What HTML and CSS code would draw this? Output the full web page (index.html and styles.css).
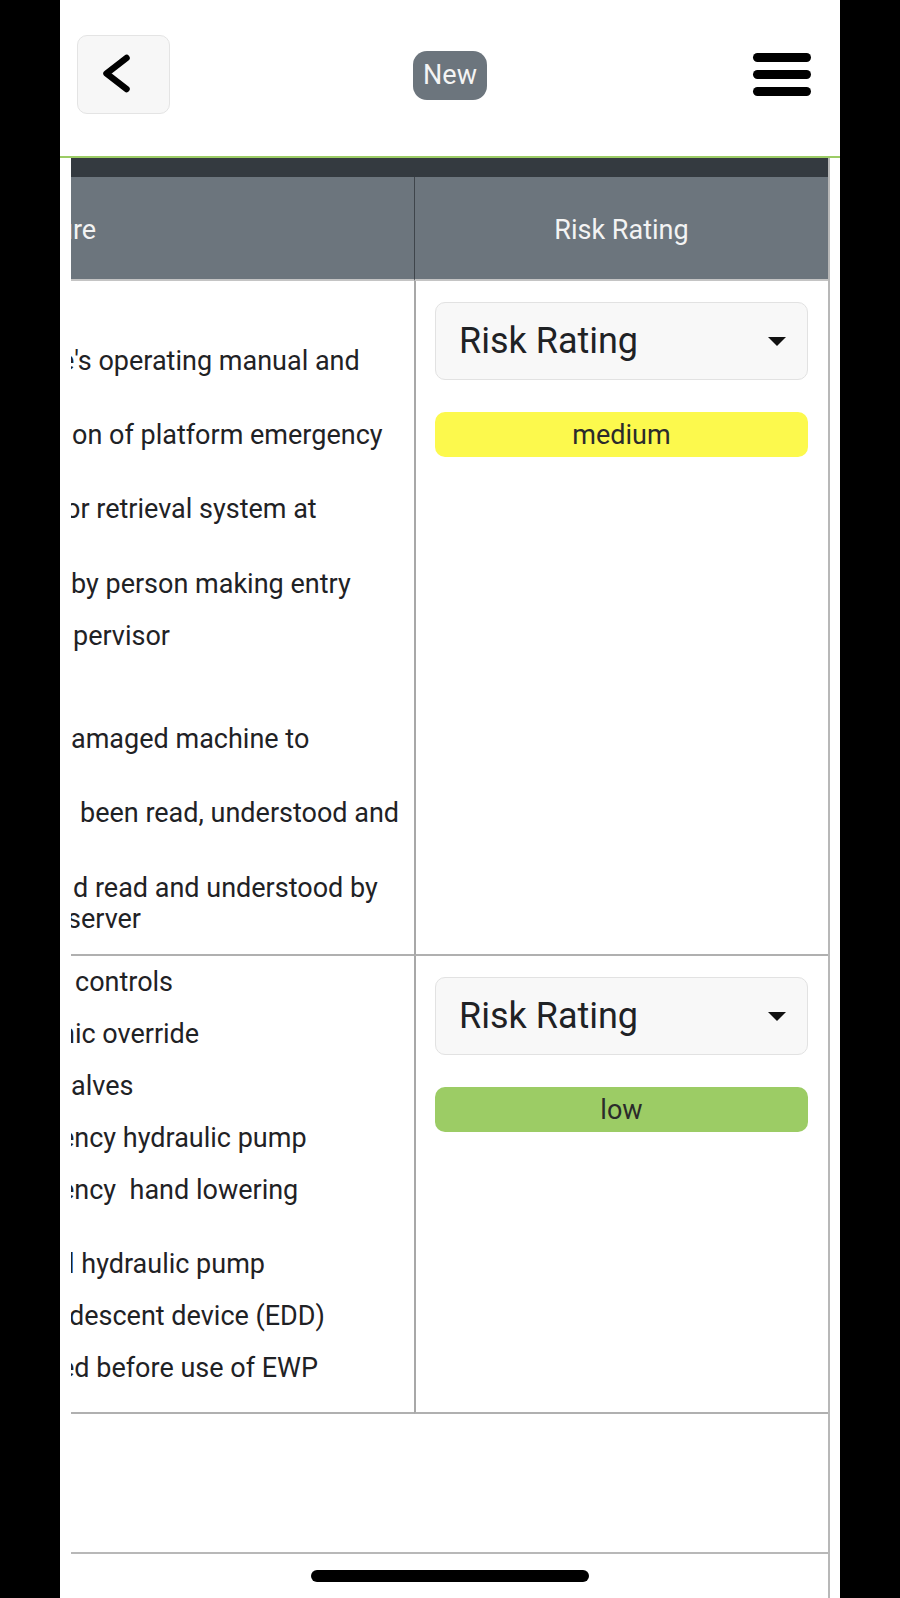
FILE: index.html
```html
<!DOCTYPE html>
<html lang="en">
<head>
<meta charset="utf-8">
<title>Risk Rating</title>
<link rel="stylesheet" href="styles.css">
</head>
<body>
<div class="screen">
  <header class="topbar">
    <button class="back-btn" aria-label="Back">
      <svg class="chev" width="91" height="77" viewBox="0 0 91 77"><polyline points="48.5,22 28.5,37.5 48.5,53" /></svg>
    </button>
    <span class="badge-new">New</span>
    <div class="menu" aria-label="Menu"><span></span><span></span><span></span></div>
  </header>

  <main class="panel">
    <div class="strip"></div>
    <div class="grid">
      <div class="th th-left"><span class="shift-n13">ure</span></div>
      <div class="th th-right">Risk Rating</div>

      <div class="td td-left row-a">
        <div class="ln shift-n11">e's operating manual and</div>
        <div class="ln gap-l shift-1">on of platform emergency</div>
        <div class="ln gap-l shift-n6">or retrieval system at</div>
        <div class="ln gap-l2">by person making entry</div>
        <div class="ln gap-s shift-2">pervisor</div>
        <div class="ln gap-xl">amaged machine to</div>
        <div class="ln gap-l shift-9">been read, understood and</div>
        <div class="ln gap-l2 shift-2">d read and understood by</div>
        <div class="ln shift-n4">server</div>
      </div>
      <div class="td td-right">
        <div class="select"><span>Risk Rating</span><svg width="18" height="9" viewBox="0 0 18 9"><polygon points="0,0 18,0 9,9" /></svg></div>
        <div class="rating medium">medium</div>
      </div>

      <div class="td td-left row-b">
        <div class="ln shift-4">controls</div>
        <div class="ln gap-s shift-n11">nic override</div>
        <div class="ln gap-s">alves</div>
        <div class="ln gap-s shift-n11">ency hydraulic pump</div>
        <div class="ln gap-s shift-n11">ency&nbsp; hand lowering</div>
        <div class="ln gap-l shift-n3">l hydraulic pump</div>
        <div class="ln gap-s shift-n2">descent device (EDD)</div>
        <div class="ln gap-s shift-n11">ed before use of EWP</div>
      </div>
      <div class="td td-right">
        <div class="select"><span>Risk Rating</span><svg width="18" height="9" viewBox="0 0 18 9"><polygon points="0,0 18,0 9,9" /></svg></div>
        <div class="rating low">low</div>
      </div>
    </div>
    <div class="fill"></div>
    <footer class="foot"><div class="home"></div></footer>
  </main>
</div>
</body>
</html>
```
FILE: styles.css
```css
* { box-sizing: border-box; }

body {
  margin: 0;
  background: #000;
  font-family: Roboto, "Noto Sans", "Liberation Sans", sans-serif;
}

.screen {
  width: 780px;
  height: 1598px;
  margin-left: 60px;
  background: #fff;
  display: flex;
  flex-direction: column;
  overflow: hidden;
}

/* top bar */
.topbar {
  height: 158px;
  flex: none;
  border-bottom: 2px solid #9ccc65;
  padding: 35px 17px 0;
  display: grid;
  grid-template-columns: 1fr auto 1fr;
  align-items: center;
  align-content: start;
}

.back-btn {
  justify-self: start;
  width: 93px;
  height: 79px;
  padding: 0;
  background: #f7f7f7;
  border: 1px solid #e4e4e4;
  border-radius: 10px;
  display: block;
}

.chev { display: block; }
.chev polyline {
  fill: none;
  stroke: #000;
  stroke-width: 6.5;
  stroke-linecap: round;
  stroke-linejoin: round;
}

.badge-new {
  height: 49px;
  margin-top: 2px;
  padding: 0 10px;
  border-radius: 14px;
  background: #6c757d;
  color: #f4f4f4;
  font-size: 27px;
  line-height: 1;
  display: flex;
  align-items: center;
}

.menu {
  justify-self: end;
  margin-right: 12px;
  width: 58px;
  display: flex;
  flex-direction: column;
  gap: 8px;
}
.menu span {
  height: 9px;
  border-radius: 4.5px;
  background: #000;
}

/* table panel */
.panel {
  flex: 1;
  margin-left: 11px;
  width: 759px;
  border-right: 2px solid #b8b8b8;
  display: flex;
  flex-direction: column;
}

.strip {
  height: 19px;
  background: #343a40;
}

.grid {
  display: grid;
  grid-template-columns: 343px 1fr;
}

.th {
  height: 104px;
  background: #6c757d;
  border-bottom: 2px solid #c4c4c4;
  color: #f3f3f3;
  font-size: 27px;
  display: flex;
  align-items: center;
  padding-top: 3px;
  white-space: nowrap;
  overflow: hidden;
}
.th-right {
  justify-content: center;
  border-left: 1px solid #3f454b;
}

.td {
  border-bottom: 2px solid #b0b0b0;
}

.td-left {
  overflow: hidden;
  white-space: nowrap;
  font-size: 27px;
  line-height: 31px;
  color: #1f2225;
}
.row-a { padding: 65px 0 19px; }
.row-b { padding: 11px 0 28px; }

.ln { height: 31px; }
.gap-s { margin-top: 21px; }
.gap-l { margin-top: 43px; }
.gap-l2 { margin-top: 44px; }
.gap-xl { margin-top: 72px; }

.shift-n13 { margin-left: -13px; }
.shift-n11 { margin-left: -11px; }
.shift-n6 { margin-left: -6px; }
.shift-n4 { margin-left: -4px; }
.shift-n3 { margin-left: -3px; }
.shift-n2 { margin-left: -2px; }
.shift-1 { margin-left: 1px; }
.shift-2 { margin-left: 2px; }
.shift-4 { margin-left: 4px; }
.shift-9 { margin-left: 9px; }

.td-right {
  border-left: 2px solid #a8a8a8;
  padding: 21px 20px 0 19px;
}

.select {
  height: 78px;
  border: 1px solid #e2e2e2;
  border-radius: 10px;
  background: #f8f8f8;
  padding: 0 21px 0 23px;
  display: flex;
  align-items: center;
  justify-content: space-between;
  font-size: 36px;
  color: #1f2225;
}
.select svg { display: block; }
.select polygon { fill: #111; }

.rating {
  margin-top: 32px;
  height: 45px;
  border-radius: 10px;
  display: flex;
  align-items: center;
  justify-content: center;
  font-size: 27px;
  color: #2b2b2b;
}
.medium { background: #fcf94d; }
.low { background: #9ccc65; }

.fill { flex: 1; }

.foot {
  height: 46px;
  border-top: 2px solid #b8b8b8;
  display: flex;
  justify-content: center;
}
.home {
  margin-top: 16px;
  width: 278px;
  height: 12px;
  border-radius: 6px;
  background: #000;
}
```
